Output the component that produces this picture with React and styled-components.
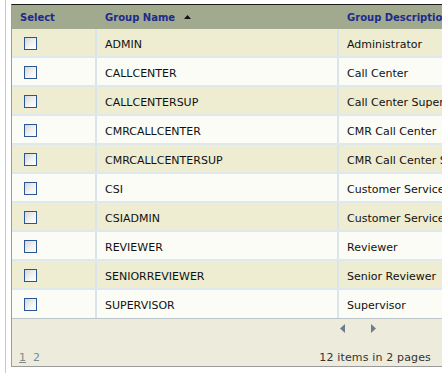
import React from "react";
import styled, { createGlobalStyle } from "styled-components";

const GlobalStyle = createGlobalStyle`
  html, body { margin: 0; padding: 0; background: #ffffff; overflow: hidden; }
  body { font-family: "DejaVu Sans", Verdana, sans-serif; }
`;

const Page = styled.div`
  margin-left: 5px;
  height: 373px;
  border-left: 1px solid #c9c9c9;
  padding: 4px 0 0 5px;
  box-sizing: border-box;
`;

const Table = styled.div`
  width: 431px;
  overflow: hidden;
  border-top: 1px solid #1a1a1a;
  border-left: 1px solid #9c9c9c;
  border-bottom: 1px solid #9a9a9a;
`;

const cols = "85px 242px 200px";

const HeaderRow = styled.div`
  display: grid;
  grid-template-columns: ${cols};
  width: 527px;
  height: 24px;
  background: #a1a98f;
`;

const HeadCell = styled.div`
  display: flex;
  align-items: center;
  gap: 9px;
  padding: 1px 0 0 8px;
  font-size: 10px;
  font-weight: bold;
  color: #1c2a8c;
  white-space: nowrap;
`;

const Row = styled.div`
  display: grid;
  grid-template-columns: ${cols};
  width: 527px;
  height: 29px;
  box-sizing: border-box;
  background: ${(p) => (p.$alt ? "#eeecd1" : "#fcfcf6")};
  border-bottom: ${(p) => (p.$last ? "1px solid #bcc6ca" : "2px solid #dfe8ec")};
`;

const Cell = styled.div`
  display: flex;
  align-items: center;
  padding: ${(p) => (p.$check ? "1px 0 0 12px" : "3px 0 0 8px")};
  border-right: ${(p) => (p.$sep ? "2px solid #d9e5ea" : "none")};
  font-size: 11px;
  color: #111;
  white-space: nowrap;
  overflow: hidden;
`;

const Check = styled.span`
  display: inline-block;
  width: 13px;
  height: 13px;
  box-sizing: border-box;
  border: 1px solid #2a5793;
  background: linear-gradient(135deg, #d6d6d6 0%, #f2f2f2 55%, #ffffff 100%);
`;

const Footer = styled.div`
  background: #edebdc;
  height: 47px;
  display: flex;
  flex-direction: column;
`;

const ArrowRow = styled.div`
  display: flex;
  justify-content: flex-end;
  gap: 26px;
  padding: 5px 67px 0 0;
  height: 10px;
`;

const InfoRow = styled.div`
  display: flex;
  justify-content: space-between;
  align-items: center;
  padding: 0 12px 0 7px;
  margin-top: 17px;
  font-size: 11px;
  line-height: 13px;
`;

const Pages = styled.div`
  display: flex;
  gap: 7px;
  color: #7b8b8b;
`;

const PageLink = styled.span`
  text-decoration: ${(p) => (p.$current ? "underline" : "none")};
`;

const Info = styled.span`
  color: #333333;
  letter-spacing: 0.15px;
`;

const SortUp = () => (
  <svg width="7" height="5" viewBox="0 0 7 5">
    <polygon points="3.5,0 7,4 0,4" fill="#111" />
  </svg>
);

const Arrow = ({ dir }) => (
  <svg width="5" height="9" viewBox="0 0 5 9">
    {dir === "left" ? (
      <polygon points="5,0 5,9 0,4.5" fill="#6d7d8d" />
    ) : (
      <polygon points="0,0 5,4.5 0,9" fill="#6d7d8d" />
    )}
  </svg>
);

const rows = [
  ["ADMIN", "Administrator"],
  ["CALLCENTER", "Call Center"],
  ["CALLCENTERSUP", "Call Center Supervisor"],
  ["CMRCALLCENTER", "CMR Call Center"],
  ["CMRCALLCENTERSUP", "CMR Call Center Supervisor"],
  ["CSI", "Customer Service"],
  ["CSIADMIN", "Customer Service Admin"],
  ["REVIEWER", "Reviewer"],
  ["SENIORREVIEWER", "Senior Reviewer"],
  ["SUPERVISOR", "Supervisor"],
];

export default function App() {
  return (
    <>
      <GlobalStyle />
      <Page>
        <Table>
          <HeaderRow>
            <HeadCell>Select</HeadCell>
            <HeadCell>
              Group Name <SortUp />
            </HeadCell>
            <HeadCell>Group Description</HeadCell>
          </HeaderRow>
          {rows.map(([name, desc], i) => (
            <Row key={name} $alt={i % 2 === 0} $last={i === rows.length - 1}>
              <Cell $check $sep>
                <Check />
              </Cell>
              <Cell $sep>{name}</Cell>
              <Cell>{desc}</Cell>
            </Row>
          ))}
          <Footer>
            <ArrowRow>
              <Arrow dir="left" />
              <Arrow dir="right" />
            </ArrowRow>
            <InfoRow>
              <Pages>
                <PageLink $current>1</PageLink>
                <PageLink>2</PageLink>
              </Pages>
              <Info>12 items in 2 pages</Info>
            </InfoRow>
          </Footer>
        </Table>
      </Page>
    </>
  );
}
